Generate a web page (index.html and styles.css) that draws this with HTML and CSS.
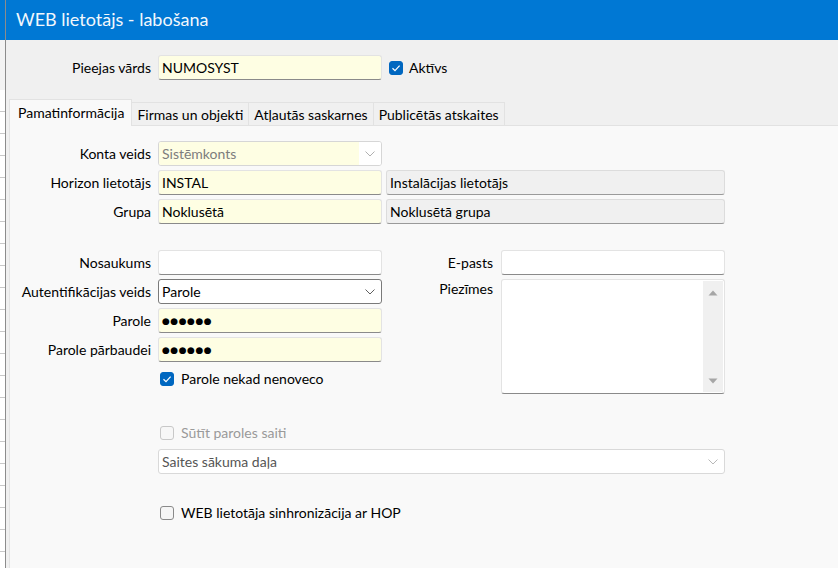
FILE: index.html
```html
<!DOCTYPE html>
<html lang="lv">
<head>
<meta charset="utf-8">
<title>WEB lietotājs - labošana</title>
<link rel="stylesheet" href="styles.css">
</head>
<body>
<div class="desk">
  <div class="bgapp"></div>
  <div class="window">
    <div class="titlebar">WEB lietotājs - labošana</div>
    <div class="top">
      <div class="toplabel">Pieejas vārds</div>
      <div class="field yellow w224">NUMOSYST</div>
      <div class="check">
        <span class="box checked"><svg viewBox="0 0 14 14" width="14" height="14"><path d="M3.5 7.2 L6 9.6 L10.6 4.6" fill="none" stroke="#fff" stroke-width="1.2"/></svg></span>
        <span>Aktīvs</span>
      </div>
    </div>
    <div class="tabs">
      <div class="tab active">Pamatinformācija</div>
      <div class="tab">Firmas un objekti</div>
      <div class="tab">Atļautās saskarnes</div>
      <div class="tab">Publicētās atskaites</div>
    </div>
    <div class="panel">
      <div class="row">
        <div class="lbl">Konta veids</div>
        <div class="field disabled w224"><span class="dtext">Sistēmkonts</span><span class="chev-area"><svg width="10" height="6" viewBox="0 0 10 6"><path d="M0.5 0.5 L5 5 L9.5 0.5" fill="none" stroke="#b0b0b0" stroke-width="1"/></svg></span></div>
      </div>
      <div class="row">
        <div class="lbl">Horizon lietotājs</div>
        <div class="field yellow w224">INSTAL</div>
        <div class="field info">Instalācijas lietotājs</div>
      </div>
      <div class="row">
        <div class="lbl">Grupa</div>
        <div class="field yellow w224">Noklusētā</div>
        <div class="field info">Noklusētā grupa</div>
      </div>

      <div class="section2">
        <div class="colL">
          <div class="row">
            <div class="lbl">Nosaukums</div>
            <div class="field white w224"></div>
          </div>
          <div class="row">
            <div class="lbl">Autentifikācijas veids</div>
            <div class="field select w224"><span>Parole</span><svg width="10" height="6" viewBox="0 0 10 6"><path d="M0.5 0.5 L5 5 L9.5 0.5" fill="none" stroke="#606060" stroke-width="1"/></svg></div>
          </div>
          <div class="row">
            <div class="lbl">Parole</div>
            <div class="field yellow w224"><span class="dots">●●●●●●</span></div>
          </div>
          <div class="row">
            <div class="lbl">Parole pārbaudei</div>
            <div class="field yellow w224"><span class="dots">●●●●●●</span></div>
          </div>
          <div class="cbrow">
            <span class="box checked"><svg viewBox="0 0 14 14" width="14" height="14"><path d="M3.5 7.2 L6 9.6 L10.6 4.6" fill="none" stroke="#fff" stroke-width="1.2"/></svg></span>
            <span>Parole nekad nenoveco</span>
          </div>
        </div>
        <div class="colR">
          <div class="row">
            <div class="rlbl">E-pasts</div>
            <div class="field white w224"></div>
          </div>
          <div class="row tall">
            <div class="rlbl top-aligned">Piezīmes</div>
            <div class="field white w224 textarea">
              <div class="scrollbar">
                <svg width="10" height="6" viewBox="0 0 10 6"><path d="M0.5 5.5 L5 0.5 L9.5 5.5 Z" fill="#a6a6a6"/></svg>
                <svg width="10" height="6" viewBox="0 0 10 6"><path d="M0.5 0.5 L5 5.5 L9.5 0.5 Z" fill="#a6a6a6"/></svg>
              </div>
            </div>
          </div>
        </div>
      </div>

      <div class="cbrow sutit">
        <span class="box disabledbox"></span>
        <span class="graytext">Sūtīt paroles saiti</span>
      </div>
      <div class="row linkrow">
        <div class="field select wide"><span class="linktext">Saites sākuma daļa</span><svg width="10" height="6" viewBox="0 0 10 6"><path d="M0.5 0.5 L5 5 L9.5 0.5" fill="none" stroke="#b8b8b8" stroke-width="1"/></svg></div>
      </div>
      <div class="cbrow sync">
        <span class="box"></span>
        <span>WEB lietotāja sinhronizācija ar HOP</span>
      </div>
    </div>
  </div>
</div>
</body>
</html>
```
FILE: styles.css
```css
* { box-sizing: border-box; }
html, body { margin: 0; padding: 0; }
body {
  width: 838px;
  height: 568px;
  overflow: hidden;
  font-family: Lato, "Liberation Sans", sans-serif;
  font-size: 14px;
  color: #000;
  background: #f0f0f0;
}
.desk { display: flex; height: 568px; }
.bgapp {
  width: 6px;
  flex: none;
  border-right: 1px solid #8c8c8c;
  background:
    repeating-linear-gradient(to bottom, transparent 0, transparent 21px, #c8c8c8 21px, #c8c8c8 22px) 0 90px / 100% 100% no-repeat,
    linear-gradient(to bottom, #0078d4 0, #0078d4 40px, #f3f3f3 40px, #f3f3f3 90px, #fff 90px);
}
.window {
  flex: 1;
  min-width: 0;
  display: flex;
  flex-direction: column;
  background: #f0f0f0;
}
.titlebar {
  height: 40px;
  flex: none;
  background: #0078d4;
  color: #f2f7fc;
  font-size: 18px;
  padding-left: 10px;
  display: flex;
  align-items: center;
  padding-bottom: 2px;
}
.top {
  display: flex;
  align-items: center;
  height: 25px;
  margin-top: 15px;
}
.toplabel { width: 145px; text-align: right; margin-right: 7px; }
.field {
  height: 25px;
  border: 1px solid #e3e3e3;
  border-bottom-color: #8a8a8a;
  border-radius: 3px;
  padding: 0 3px;
  display: flex;
  align-items: center;
  white-space: nowrap;
  overflow: hidden;
}
.w224 { width: 224px; flex: none; }
.yellow { background: #fefee3; }
.white { background: #fff; }
.info {
  width: 339px;
  margin-left: 4px;
  background: #f0f0f0;
  border-color: #dcdcdc;
  border-bottom-color: #9a9a9a;
}
.disabled {
  background: #fff;
  border-color: #d6d6d6;
  padding: 0;
}
.dtext {
  flex: 1;
  height: 100%;
  background: #fefee3;
  color: #7d7d7d;
  display: flex;
  align-items: center;
  padding-left: 3px;
}
.chev-area {
  width: 22px;
  height: 100%;
  display: flex;
  align-items: center;
  justify-content: center;
  background: #fff;
}
.select {
  background: #fff;
  border: 1px solid #7a7a7a;
  justify-content: space-between;
  padding-right: 6px;
}
.check { display: flex; align-items: center; margin-left: 7px; }
.box {
  width: 14px;
  height: 14px;
  border-radius: 3px;
  border: 1px solid #8a8a8a;
  background: #f6f6f6;
  margin-right: 6px;
  flex: none;
  display: flex;
}
.box.checked { background: #0067c0; border-color: #0067c0; }
.box.checked svg { margin: -1px; }
.box.disabledbox { border-color: #c8c8c8; background: #f7f7f7; }
.tabs {
  display: flex;
  align-items: flex-end;
  margin-top: 19px;
  padding-left: 3px;
  height: 26px;
  position: relative;
  z-index: 1;
}
.tab {
  height: 23px;
  padding: 0 5px;
  border: 1px solid #e2e2e2;
  border-bottom: none;
  border-left: none;
  background: #f0f0f0;
  display: flex;
  align-items: center;
  white-space: nowrap;
}
.tab.active {
  height: 27px;
  margin-bottom: -1px;
  background: #f9f9f9;
  border-left: 1px solid #e2e2e2;
  padding: 0 7px 2px 8px;
}
.panel {
  flex: 1;
  margin-left: 3px;
  background: #f9f9f9;
  border: 1px solid #e2e2e2;
  border-right: none;
  border-bottom: none;
  padding-top: 15px;
}
.row {
  display: flex;
  align-items: center;
  height: 25px;
  margin-bottom: 4px;
}
.lbl { width: 141px; text-align: right; margin-right: 7px; flex: none; }
.section2 { display: flex; margin-top: 26px; }
.colL { width: 372px; flex: none; }
.colR { flex: none; }
.rlbl { width: 111px; text-align: right; margin-right: 8px; flex: none; }
.row.tall { height: 115px; align-items: flex-start; }
.top-aligned { line-height: 20px; }
.textarea { height: 115px; align-items: stretch; justify-content: flex-end; padding: 1px 1px 1px 0; }
.scrollbar {
  width: 20px;
  background: #f0f0f0;
  display: flex;
  flex-direction: column;
  align-items: center;
  justify-content: space-between;
  padding: 9px 0 8px;
}
.dots { font-family: "DejaVu Sans", sans-serif; font-size: 9px; letter-spacing: 0.5px; padding-top: 1px; }
.cbrow {
  display: flex;
  align-items: center;
  height: 25px;
  padding-left: 150px;
}
.cbrow .box { margin-right: 7px; }
.sutit { margin-top: 22px; margin-bottom: 4px; }
.graytext { color: #9a9a9a; }
.linkrow { padding-left: 148px; }
.wide { width: 567px; border-color: #d9d9d9; }
.linktext { color: #555; }
.sync { margin-top: 26px; }
```
